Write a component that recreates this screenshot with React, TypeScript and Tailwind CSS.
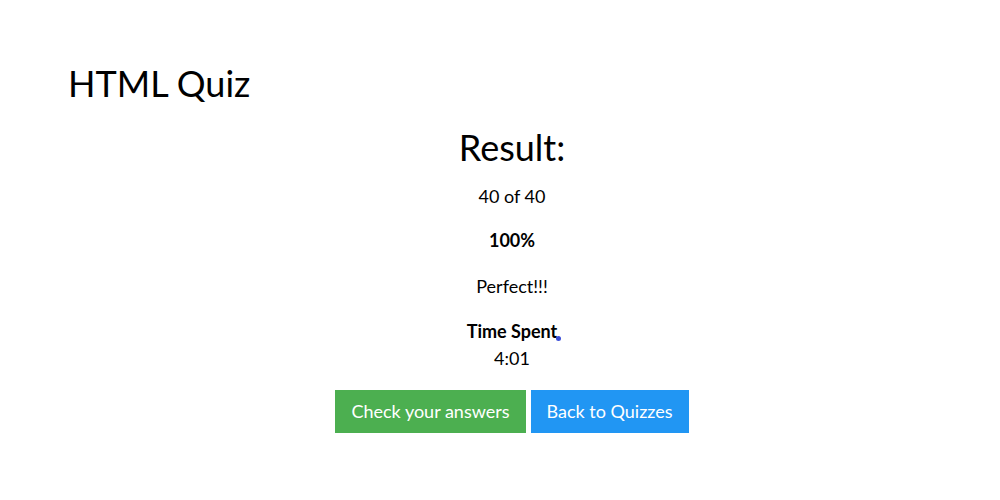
import React from 'react';

const font = { fontFamily: 'Lato, "Noto Sans", sans-serif' };

export default function App() {
  return (
    <div className="min-h-screen bg-white pl-[24px] pt-[62px] text-black" style={font}>
      <h2 className="pl-[44px] text-[36px] leading-[43px] font-normal">HTML Quiz</h2>

      {/* Result */}
      <div className="mt-[21px] flex flex-col items-center text-[18px] leading-[27px]">
        <h2 className="text-[36px] leading-[43px] font-normal">Result:</h2>
        <p className="mt-[14px]">40 of 40</p>
        <p className="mt-[17px] font-bold">100%</p>
        <p className="mt-[19px]">Perfect!!!</p>
        <p className="mt-[18px] text-center">
          <b className="relative">
            Time Spent
            <span className="absolute right-[-4px] bottom-[1px] h-[5px] w-[5px] rounded-full bg-[#3b4fd8]" />
          </b>
          <br />
          4:01
        </p>
        <div className="mt-[18px] flex gap-[5px]">
          <button className="bg-[#4caf50] px-4 py-2 text-[18px] leading-[27px] text-white">
            Check your answers
          </button>
          <button className="bg-[#2196f3] px-4 py-2 text-[18px] leading-[27px] text-white">
            Back to Quizzes
          </button>
        </div>
      </div>
    </div>
  );
}
